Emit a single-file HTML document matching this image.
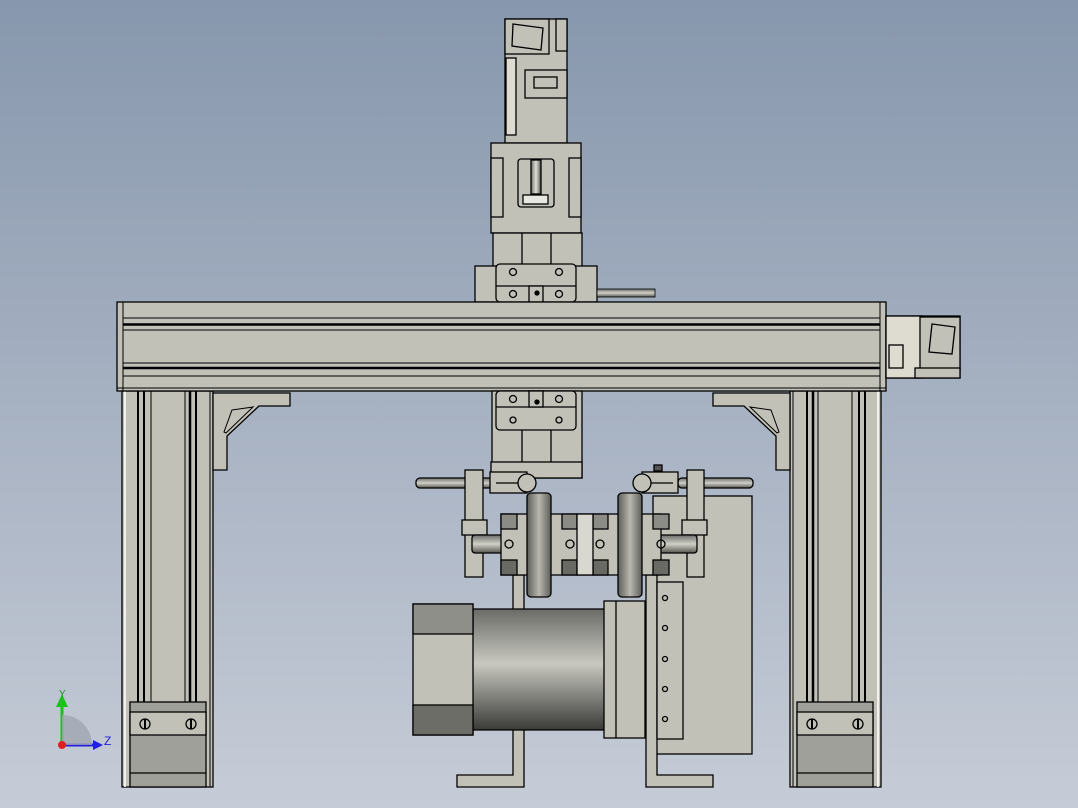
<!DOCTYPE html>
<html><head><style>
html,body{margin:0;padding:0;width:1078px;height:808px;overflow:hidden}
svg{display:block}
</style></head><body>
<svg width="1078" height="808" viewBox="0 0 1078 808" xmlns="http://www.w3.org/2000/svg" font-family="Liberation Sans, sans-serif">
<defs>
<linearGradient id="bg" x1="0" y1="0" x2="0" y2="1">
<stop offset="0" stop-color="#8797ad"/><stop offset="1" stop-color="#c6ccd7"/>
</linearGradient>
<linearGradient id="cyl" x1="0" y1="0" x2="0" y2="1">
<stop offset="0" stop-color="#6a6b66"/><stop offset="0.45" stop-color="#c8c8c0"/><stop offset="1" stop-color="#3a3b38"/>
</linearGradient>
<linearGradient id="wheel" x1="0" y1="0" x2="1" y2="0">
<stop offset="0" stop-color="#5c5d59"/><stop offset="0.5" stop-color="#b8b8b0"/><stop offset="1" stop-color="#5c5d59"/>
</linearGradient>
<linearGradient id="rod" x1="0" y1="0" x2="0" y2="1">
<stop offset="0" stop-color="#6d6e6a"/><stop offset="0.5" stop-color="#d0d0c8"/><stop offset="1" stop-color="#55564f"/>
</linearGradient>
<linearGradient id="vrod" x1="0" y1="0" x2="1" y2="0">
<stop offset="0" stop-color="#6d6e6a"/><stop offset="0.5" stop-color="#e0e0d8"/><stop offset="1" stop-color="#55564f"/>
</linearGradient>
</defs>
<rect width="1078" height="808" fill="url(#bg)"/>
<g stroke="#000" stroke-width="1.3" fill="#c1c1b8">

<!-- Top Z motor -->
<rect x="505" y="19" width="62" height="124"/>
<rect x="505" y="19" width="44" height="35"/>
<polygon points="513,24 543,28 541,50 512,46" fill="none"/>
<rect x="556" y="19" width="11" height="32"/>
<rect x="525" y="70" width="42" height="28"/>
<rect x="534" y="77" width="23" height="11" fill="none"/>
<rect x="506" y="58" width="10" height="77" fill="#dedbd0"/>
<!-- block -->
<rect x="491" y="143" width="90" height="90"/>
<rect x="491" y="158" width="12" height="59"/>
<rect x="569" y="158" width="12" height="59"/>
<rect x="518" y="159" width="36" height="48" rx="3"/>
<rect x="531" y="160" width="10" height="34" fill="url(#vrod)"/>
<rect x="523" y="195" width="25" height="9" fill="#e8e8e2"/>
<!-- carriage -->
<rect x="493" y="233" width="89" height="69"/>
<line x1="522" y1="233" x2="522" y2="265"/><line x1="551" y1="233" x2="551" y2="265"/>
<rect x="475" y="266" width="122" height="36"/>
<rect x="496" y="264" width="80" height="38" rx="4"/>
<line x1="496" y1="286" x2="576" y2="286"/>
<rect x="529" y="286" width="14" height="16"/>
<circle cx="513" cy="272" r="3.5" fill="none"/><circle cx="559" cy="272" r="3.5" fill="none"/>
<circle cx="513" cy="294" r="3.5" fill="none"/><circle cx="559" cy="294" r="3.5" fill="none"/>
<circle cx="537" cy="293" r="2" fill="#000"/>
<rect x="597" y="289" width="58" height="8" fill="url(#rod)" stroke-width="0.8"/>

<!-- Legs -->
<rect x="122" y="391" width="91" height="396"/>
<rect x="790" y="391" width="91" height="396"/>
<g stroke-width="1">
<line x1="125" y1="391" x2="125" y2="787" stroke="#fff" stroke-width="1.5"/>
<line x1="138" y1="391" x2="138" y2="702" stroke-width="2"/>
<line x1="144" y1="391" x2="144" y2="702" stroke-width="2"/>
<line x1="151" y1="391" x2="151" y2="702"/>
<line x1="185" y1="391" x2="185" y2="702"/>
<line x1="190" y1="391" x2="190" y2="702" stroke-width="2.5"/>
<line x1="196" y1="391" x2="196" y2="702" stroke-width="2"/>
<line x1="210" y1="391" x2="210" y2="787"/>
<line x1="793" y1="391" x2="793" y2="787"/>
<line x1="807" y1="391" x2="807" y2="702" stroke-width="2"/>
<line x1="813" y1="391" x2="813" y2="702" stroke-width="2.5"/>
<line x1="818" y1="391" x2="818" y2="702"/>
<line x1="852" y1="391" x2="852" y2="702"/>
<line x1="859" y1="391" x2="859" y2="702" stroke-width="2"/>
<line x1="865" y1="391" x2="865" y2="702" stroke-width="2"/>
<line x1="878" y1="391" x2="878" y2="787" stroke="#fff" stroke-width="1.5"/>
</g>
<!-- feet -->
<rect x="130" y="702" width="76" height="85" fill="#a0a09a"/>
<rect x="130" y="712" width="76" height="23" fill="#c1c1b8"/>
<line x1="130" y1="773" x2="206" y2="773"/>
<rect x="797" y="702" width="76" height="85" fill="#a0a09a"/>
<rect x="797" y="712" width="76" height="23" fill="#c1c1b8"/>
<line x1="797" y1="773" x2="873" y2="773"/>
<g fill="none"><circle cx="145" cy="724" r="5"/><circle cx="191" cy="724" r="5"/><circle cx="812" cy="724" r="5"/><circle cx="858" cy="724" r="5"/></g>
<g stroke-width="2"><line x1="145" y1="719" x2="145" y2="729"/><line x1="191" y1="719" x2="191" y2="729"/><line x1="812" y1="719" x2="812" y2="729"/><line x1="858" y1="719" x2="858" y2="729"/></g>
<!-- brackets -->
<polygon points="213,393 290,393 290,406 259,406 227,436 227,470 213,470"/>
<polygon points="232,410 253,407 226,433 224,432" fill="none" stroke-width="1"/>
<polygon points="865,393 788,393 788,406 819,406 851,436 851,470 865,470" transform="translate(-75,0)"/>
<polygon points="771,410 750,407 777,433 779,432" fill="none" stroke-width="1" transform="translate(0,0)"/>

<!-- Beam -->
<rect x="117" y="302" width="769" height="89"/>
<line x1="123" y1="302" x2="123" y2="391" stroke-width="1"/>
<line x1="880" y1="302" x2="880" y2="391" stroke-width="1"/>
<line x1="123" y1="318" x2="880" y2="318" stroke-width="1"/>
<line x1="123" y1="324.5" x2="880" y2="324.5" stroke-width="2.5"/>
<line x1="123" y1="330" x2="880" y2="330" stroke-width="1"/>
<line x1="123" y1="363" x2="880" y2="363" stroke-width="1"/>
<line x1="123" y1="368" x2="880" y2="368" stroke-width="2.5"/>
<line x1="123" y1="376" x2="880" y2="376" stroke-width="1"/>
<line x1="117" y1="388" x2="886" y2="388" stroke-width="1"/>
<!-- right motor -->
<rect x="886" y="316" width="74" height="62"/>
<rect x="886" y="316" width="36" height="62" fill="#dedbd0"/>
<rect x="920" y="317" width="40" height="53"/>
<polygon points="932,324 955,327 952,354 929,352" fill="none"/>
<rect x="889" y="345" width="14" height="23" fill="none"/>
<rect x="915" y="368" width="45" height="10"/>

<!-- Z block below beam -->
<rect x="492" y="391" width="90" height="87"/>
<rect x="496" y="391" width="80" height="39" rx="4"/>
<line x1="496" y1="407" x2="576" y2="407"/>
<rect x="529" y="391" width="14" height="16"/>
<circle cx="513" cy="399" r="3.5" fill="none"/><circle cx="559" cy="399" r="3.5" fill="none"/>
<circle cx="513" cy="420" r="3" fill="none"/><circle cx="559" cy="420" r="3" fill="none"/>
<circle cx="537" cy="402" r="2" fill="#000"/>
<line x1="522" y1="430" x2="522" y2="462"/><line x1="551" y1="430" x2="551" y2="462"/>
<rect x="491" y="462" width="91" height="16"/>

<!-- Big right plate -->
<rect x="653" y="496" width="99" height="258"/>
<!-- L brackets -->
<polygon points="513,575 524,575 524,787 457,787 457,775 513,775"/>
<polygon points="646,575 657,575 657,775 713,775 713,787 646,787"/>
<!-- perforated strip -->
<rect x="657" y="582" width="26" height="157"/>
<g fill="none"><circle cx="665" cy="598" r="2.5"/><circle cx="665" cy="628" r="2.5"/><circle cx="665" cy="659" r="2.5"/><circle cx="665" cy="689" r="2.5"/><circle cx="665" cy="719" r="2.5"/></g>
<!-- motor -->
<rect x="473" y="609" width="131" height="121" fill="url(#cyl)" stroke="none"/>
<line x1="473" y1="609" x2="604" y2="609"/><line x1="473" y1="730" x2="604" y2="730"/>
<rect x="413" y="604" width="60" height="131" fill="#c1c1b8"/>
<rect x="413" y="604" width="60" height="30" fill="#8f8f89"/>
<rect x="413" y="705" width="60" height="30" fill="#6d6d68"/>
<rect x="604" y="601" width="41" height="137"/>
<line x1="616" y1="601" x2="616" y2="738"/>
<!-- rods -->
<rect x="416" y="478" width="84" height="10" rx="4" fill="url(#rod)"/>
<rect x="678" y="478" width="75" height="10" rx="4" fill="url(#rod)"/>
<!-- clamps -->
<rect x="490" y="472" width="37" height="21"/>
<rect x="642" y="472" width="36" height="21"/>
<line x1="496" y1="483" x2="520" y2="483"/><line x1="650" y1="483" x2="673" y2="483"/>
<circle cx="527" cy="483" r="9"/><circle cx="642" cy="483" r="9"/>
<rect x="654" y="465" width="8" height="6" fill="#555"/>
<!-- vertical plates -->
<rect x="465" y="470" width="18" height="107"/>
<rect x="687" y="470" width="17" height="107"/>
<rect x="462" y="520" width="25" height="15"/>
<rect x="682" y="520" width="25" height="15"/>
<!-- shaft -->
<rect x="472" y="535" width="225" height="18" rx="3" fill="url(#rod)"/>
<!-- bearing blocks -->
<rect x="501" y="514" width="160" height="61"/>
<rect x="501" y="514" width="16" height="15" fill="#8c8c86"/><rect x="501" y="560" width="16" height="15" fill="#6a6a65"/>
<rect x="562" y="514" width="15" height="15" fill="#8c8c86"/><rect x="562" y="560" width="15" height="15" fill="#6a6a65"/>
<rect x="593" y="514" width="15" height="15" fill="#8c8c86"/><rect x="593" y="560" width="15" height="15" fill="#6a6a65"/>
<rect x="653" y="514" width="16" height="15" fill="#8c8c86"/><rect x="653" y="560" width="16" height="15" fill="#6a6a65"/>
<rect x="577" y="514" width="16" height="61" fill="#d8d8d0"/>
<g fill="none"><circle cx="509" cy="544" r="4"/><circle cx="570" cy="544" r="4"/><circle cx="600" cy="544" r="4"/><circle cx="661" cy="544" r="4"/></g>
<!-- wheels -->
<rect x="527" y="493" width="24" height="104" rx="4" fill="url(#wheel)"/>
<rect x="618" y="493" width="24" height="104" rx="4" fill="url(#wheel)"/>
</g>

<!-- axis triad -->
<g>
<line x1="62" y1="745" x2="62" y2="703" stroke="#1cc21c" stroke-width="3"/>
<polygon points="56,707 62,694 68,707" fill="#1cc21c"/>
<line x1="62" y1="745" x2="95" y2="745" stroke="#2020e0" stroke-width="3"/>
<polygon points="93,740 103,745 93,750" fill="#2020e0"/>
<path d="M62,745 L62,715 A30,30 0 0 1 92,745 Z" fill="#a0a6b2" opacity="0.8"/>
<circle cx="62" cy="745" r="4" fill="#e02020"/>
<text x="59" y="697" font-size="10" fill="#1a9a1a">Y</text>
<text x="104" y="745" font-size="12" fill="#2020d0">Z</text>
</g>
</svg>
</body></html>
